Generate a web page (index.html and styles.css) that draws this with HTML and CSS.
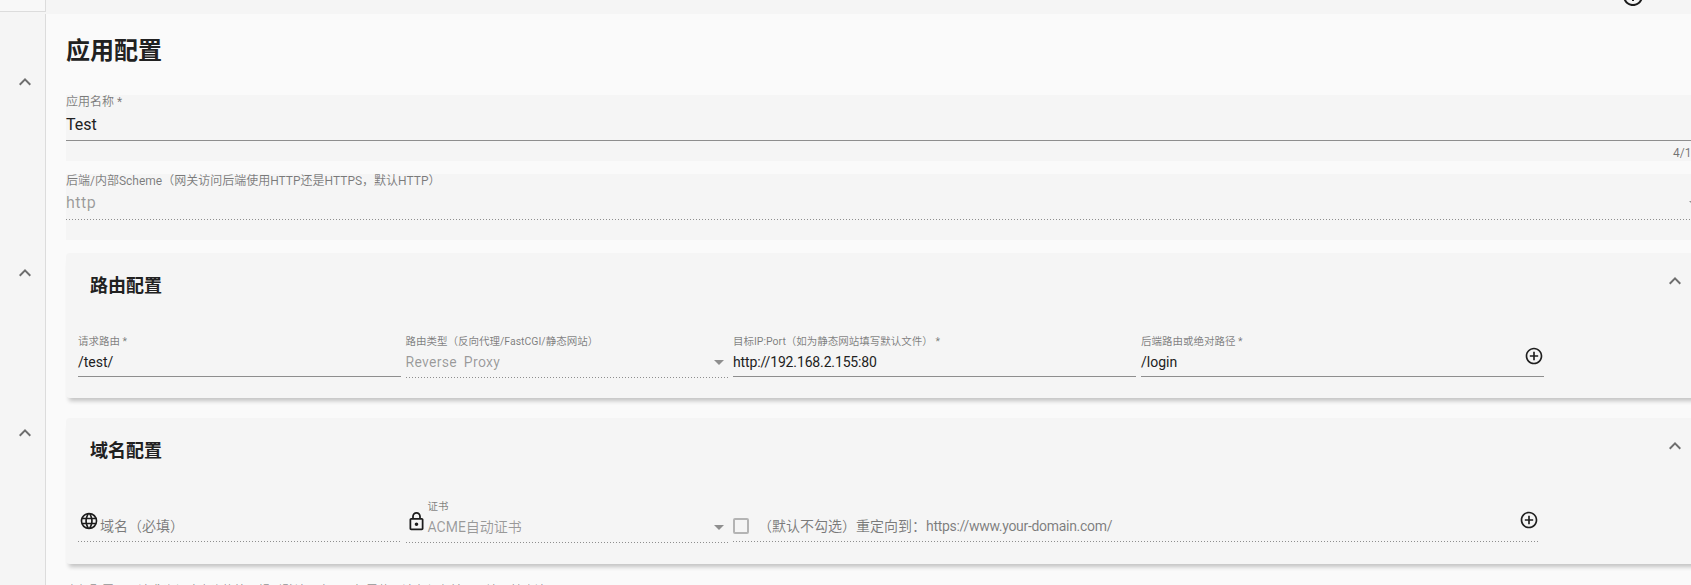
FILE: index.html
```html
<!DOCTYPE html>
<html lang="zh-CN">
<head>
<meta charset="utf-8">
<title>应用配置</title>
<link rel="stylesheet" href="styles.css">
</head>
<body>
<div class="page">
  <div class="topbar">
    <div class="topbar-box"></div>
    <svg class="top-icon" viewBox="0 0 24 24"><path d="M13 7h-2v4H7v2h4v4h2v-4h4v-2h-4V7zm-1-5C6.48 2 2 6.48 2 12s4.48 10 10 10 10-4.48 10-10S17.52 2 12 2zm0 18c-4.41 0-8-3.59-8-8s3.59-8 8-8 8 3.59 8 8-3.59 8-8 8z"/></svg>
  </div>
  <div class="body">
    <aside class="sidebar">
      <svg class="chevron side-a" viewBox="0 0 24 24"><path d="M12 8l-6 6 1.41 1.41L12 10.83l4.59 4.58L18 14z"/></svg>
      <svg class="chevron side-b" viewBox="0 0 24 24"><path d="M12 8l-6 6 1.41 1.41L12 10.83l4.59 4.58L18 14z"/></svg>
      <svg class="chevron side-c" viewBox="0 0 24 24"><path d="M12 8l-6 6 1.41 1.41L12 10.83l4.59 4.58L18 14z"/></svg>
    </aside>
    <main class="main">
      <div class="content">
        <h1 class="page-title">应用配置</h1>

        <div class="wide-field">
          <div class="wide-label">应用名称 *</div>
          <div class="wide-value solid">Test</div>
          <div class="counter">4/128</div>
        </div>

        <div class="wide-field second">
          <div class="wide-label">后端/内部Scheme（网关访问后端使用HTTP还是HTTPS，默认HTTP）</div>
          <div class="wide-value dots muted"><span class="tracked">http</span><span class="arrow wide-arrow"></span></div>
        </div>

        <section class="card">
          <div class="card-head">
            <h2 class="card-title">路由配置</h2>
            <svg class="chevron" viewBox="0 0 24 24"><path d="M12 8l-6 6 1.41 1.41L12 10.83l4.59 4.58L18 14z"/></svg>
          </div>
          <div class="grid">
            <div class="field solid">
              <div class="label">请求路由 *</div>
              <div class="value">/test/</div>
            </div>
            <div class="field select dots">
              <div class="label">路由类型（反向代理/FastCGI/静态网站）</div>
              <div class="value muted spaced">Reverse Proxy<span class="arrow"></span></div>
            </div>
            <div class="field solid">
              <div class="label">目标IP:Port（如为静态网站填写默认文件） *</div>
              <div class="value"><span class="tight">http://192.168.2.155:80</span></div>
            </div>
            <div class="field solid with-action">
              <div class="stack">
                <div class="label">后端路由或绝对路径 *</div>
                <div class="value">/login</div>
              </div>
              <svg class="plus" viewBox="0 0 24 24"><path d="M13 7h-2v4H7v2h4v4h2v-4h4v-2h-4V7zm-1-5C6.48 2 2 6.48 2 12s4.48 10 10 10 10-4.48 10-10S17.52 2 12 2zm0 18c-4.41 0-8-3.59-8-8s3.59-8 8-8 8 3.59 8 8-3.59 8-8 8z"/></svg>
            </div>
          </div>
        </section>

        <section class="card domain">
          <div class="card-head">
            <h2 class="card-title">域名配置</h2>
            <svg class="chevron" viewBox="0 0 24 24"><path d="M12 8l-6 6 1.41 1.41L12 10.83l4.59 4.58L18 14z"/></svg>
          </div>
          <div class="grid">
            <div class="field dots with-icon">
              <svg class="globe" viewBox="0 0 24 24"><path d="M16.36,14C16.44,13.34 16.5,12.68 16.5,12C16.5,11.32 16.44,10.66 16.36,10H19.74C19.9,10.64 20,11.31 20,12C20,12.69 19.9,13.36 19.74,14M14.59,19.56C15.19,18.45 15.65,17.25 15.97,16H18.92C17.96,17.65 16.43,18.93 14.59,19.56M14.34,14H9.66C9.56,13.34 9.5,12.68 9.5,12C9.5,11.32 9.56,10.65 9.66,10H14.34C14.43,10.65 14.5,11.32 14.5,12C14.5,12.68 14.43,13.34 14.34,14M12,19.96C11.17,18.76 10.5,17.43 10.09,16H13.91C13.5,17.43 12.83,18.76 12,19.96M8,8H5.08C6.03,6.34 7.57,5.06 9.4,4.44C8.8,5.55 8.35,6.75 8,8M5.08,16H8C8.35,17.25 8.8,18.45 9.4,19.56C7.57,18.93 6.03,17.65 5.08,16M4.26,14C4.1,13.36 4,12.69 4,12C4,11.31 4.1,10.64 4.26,10H7.64C7.56,10.66 7.5,11.32 7.5,12C7.5,12.68 7.56,13.34 7.64,14M12,4.03C12.83,5.23 13.5,6.57 13.91,8H10.09C10.5,6.57 11.17,5.23 12,4.03M18.92,8H15.97C15.65,6.75 15.19,5.55 14.59,4.44C16.43,5.07 17.96,6.34 18.92,8M12,2C6.47,2 2,6.5 2,12A10,10 0 0,0 12,22A10,10 0 0,0 22,12A10,10 0 0,0 12,2Z"/></svg>
              <div class="value placeholder">域名（必填）</div>
            </div>
            <div class="field select dots with-icon">
              <svg class="lock" viewBox="0 0 24 24"><path d="M18 8h-1V6c0-2.76-2.24-5-5-5S7 3.24 7 6v2H6c-1.1 0-2 .9-2 2v10c0 1.1.9 2 2 2h12c1.1 0 2-.9 2-2V10c0-1.1-.9-2-2-2zM9 6c0-1.66 1.34-3 3-3s3 1.34 3 3v2H9V6zm9 14H6V10h12v10zm-6-3c1.1 0 2-.9 2-2s-.9-2-2-2-2 .9-2 2 .9 2 2 2z"/></svg>
              <div class="stack">
                <div class="label">证书</div>
                <div class="value muted">ACME自动证书<span class="arrow"></span></div>
              </div>
            </div>
            <div class="field dots span-two with-action">
              <div class="redirect">
                <span class="checkbox"></span>
                <div class="value placeholder"><span>（默认不勾选）重定向到：<span class="url">https://www.your-domain.com/</span></span></div>
              </div>
              <svg class="plus" viewBox="0 0 24 24"><path d="M13 7h-2v4H7v2h4v4h2v-4h4v-2h-4V7zm-1-5C6.48 2 2 6.48 2 12s4.48 10 10 10 10-4.48 10-10S17.52 2 12 2zm0 18c-4.41 0-8-3.59-8-8s3.59-8 8-8 8 3.59 8 8-3.59 8-8 8z"/></svg>
            </div>
          </div>
        </section>

        <p class="note">高级配置项：请求头与响应头的处理规则默认不启用，如需使用请在保存前逐项填写并确认</p>
      </div>
    </main>
  </div>
</div>
</body>
</html>
```
FILE: styles.css
```css
* { box-sizing: border-box; }
html, body { margin: 0; height: 100%; overflow: hidden; }
body {
  background: #f5f5f5;
  color: #212121;
  font-family: Roboto, "Noto Sans CJK SC", sans-serif;
}
svg { display: block; flex: none; fill: currentColor; }

.page { height: 585px; display: flex; flex-direction: column; overflow: hidden; }

.topbar { height: 14px; flex: none; display: flex; justify-content: space-between; overflow: hidden; }
.topbar-box { width: 46px; height: 12px; background: #f8f8f8; border-right: 1px solid #dcdcdc; border-bottom: 1px solid #dcdcdc; }
.top-icon { width: 24px; height: 24px; margin: -16px 46px 0 0; color: #1c1c1c; }

.body { flex: 1; display: flex; min-height: 0; }
.sidebar { width: 46px; flex: none; border-right: 1px solid #dcdcdc; display: flex; flex-direction: column; align-items: center; padding-left: 5px; }
.chevron { width: 24px; height: 24px; color: #6e6e6e; }
.side-a { margin-top: 56px; }
.side-b { margin-top: 167px; }
.side-c { margin-top: 136px; }

.main { flex: 1; min-width: 0; background: #fafafa; padding-left: 20px; overflow: hidden; }
.content { width: 1650px; padding-top: 21px; }
.page-title { margin: 0 0 28px; font-size: 24px; line-height: 32px; font-weight: 700; color: #212121; }

.wide-field { height: 66px; background: #f5f5f5; }
.wide-field.second { margin-top: 13px; }
.wide-label { font-size: 12px; line-height: 14px; margin-bottom: 3px; color: rgba(0, 0, 0, .5); white-space: nowrap; }
.wide-value { display: flex; justify-content: space-between; align-items: center; height: 29px; padding-bottom: 3px; font-size: 16px; line-height: 24px; }
.second .wide-value { padding-bottom: 5px; }
.counter { padding: 2px 11px 0 0; font-size: 12px; line-height: 20px; text-align: right; color: rgba(0, 0, 0, .54); }

.solid { border-bottom: 1px solid #8e8e8e; }
.dots {
  background-image: linear-gradient(to right, rgba(0, 0, 0, .42) 33%, transparent 0);
  background-position: left bottom;
  background-size: 3px 1px;
  background-repeat: repeat-x;
}
.muted { color: rgba(0, 0, 0, .38); }
.placeholder { color: rgba(0, 0, 0, .5); }
.spaced { letter-spacing: .3px; word-spacing: 3px; }
.tracked { letter-spacing: .5px; }
.tight { letter-spacing: -.14px; }
.url { letter-spacing: -.3px; }

.card {
  margin-top: 13px;
  height: 145px;
  background: #f5f5f5;
  border-radius: 4px;
  box-shadow: 0 6px 4px -3px rgba(0, 0, 0, .22);
  padding-left: 12px;
}
.card.domain { margin-top: 20px; height: 146px; }
.card-head { height: 83px; display: flex; justify-content: space-between; align-items: flex-start; padding: 16px 29px 0 12px; }
.card-title { margin: 5px 0 0; font-size: 18px; line-height: 24px; font-weight: 700; color: #212121; }

.grid { display: grid; grid-template-columns: 322.5px 322.5px 403px 403px; column-gap: 5px; align-items: start; }
.field { height: 41px; }
.field.select { height: 42px; }
.label { height: 12px; margin-bottom: 4px; font-size: 10.5px; line-height: 12px; color: rgba(0, 0, 0, .5); white-space: nowrap; }
.value { display: flex; justify-content: space-between; align-items: center; font-size: 14px; line-height: 20px; white-space: nowrap; }
.select .value { padding-right: 4px; }
.domain .select .value { margin-top: 1px; }

.arrow { width: 0; height: 0; flex: none; border-left: 5px solid transparent; border-right: 5px solid transparent; border-top: 5px solid #8f8f8f; }
.wide-arrow { margin-right: 17px; }

.stack { flex: 1; min-width: 0; }
.with-action { display: flex; align-items: stretch; }
.plus { align-self: flex-end; width: 20px; height: 20px; margin-bottom: 10px; color: #1f1f1f; }
.span-two { grid-column: span 2; width: 806px; }
.span-two .plus { margin-bottom: 12px; }

.with-icon { display: flex; align-items: flex-end; padding-bottom: 1px; }
.with-icon > .value { padding-bottom: 5px; }
.with-icon > .stack { align-self: flex-start; }
.globe { width: 20px; height: 20px; margin: 0 1px 10px 1px; color: #1c1c1c; }
.lock { width: 21px; height: 21px; margin: 0 1px 10px 0; color: #1c1c1c; }

.redirect { flex: 1; display: flex; align-items: flex-end; padding-bottom: 6px; }
.checkbox { width: 16px; height: 16px; flex: none; margin: 0 9px 2px 0; border: 2px solid #b4b4b4; border-radius: 2px; }

.note { margin: 20px 0 0; font-size: 12px; line-height: 14px; color: rgba(0, 0, 0, .45); white-space: nowrap; }
```
